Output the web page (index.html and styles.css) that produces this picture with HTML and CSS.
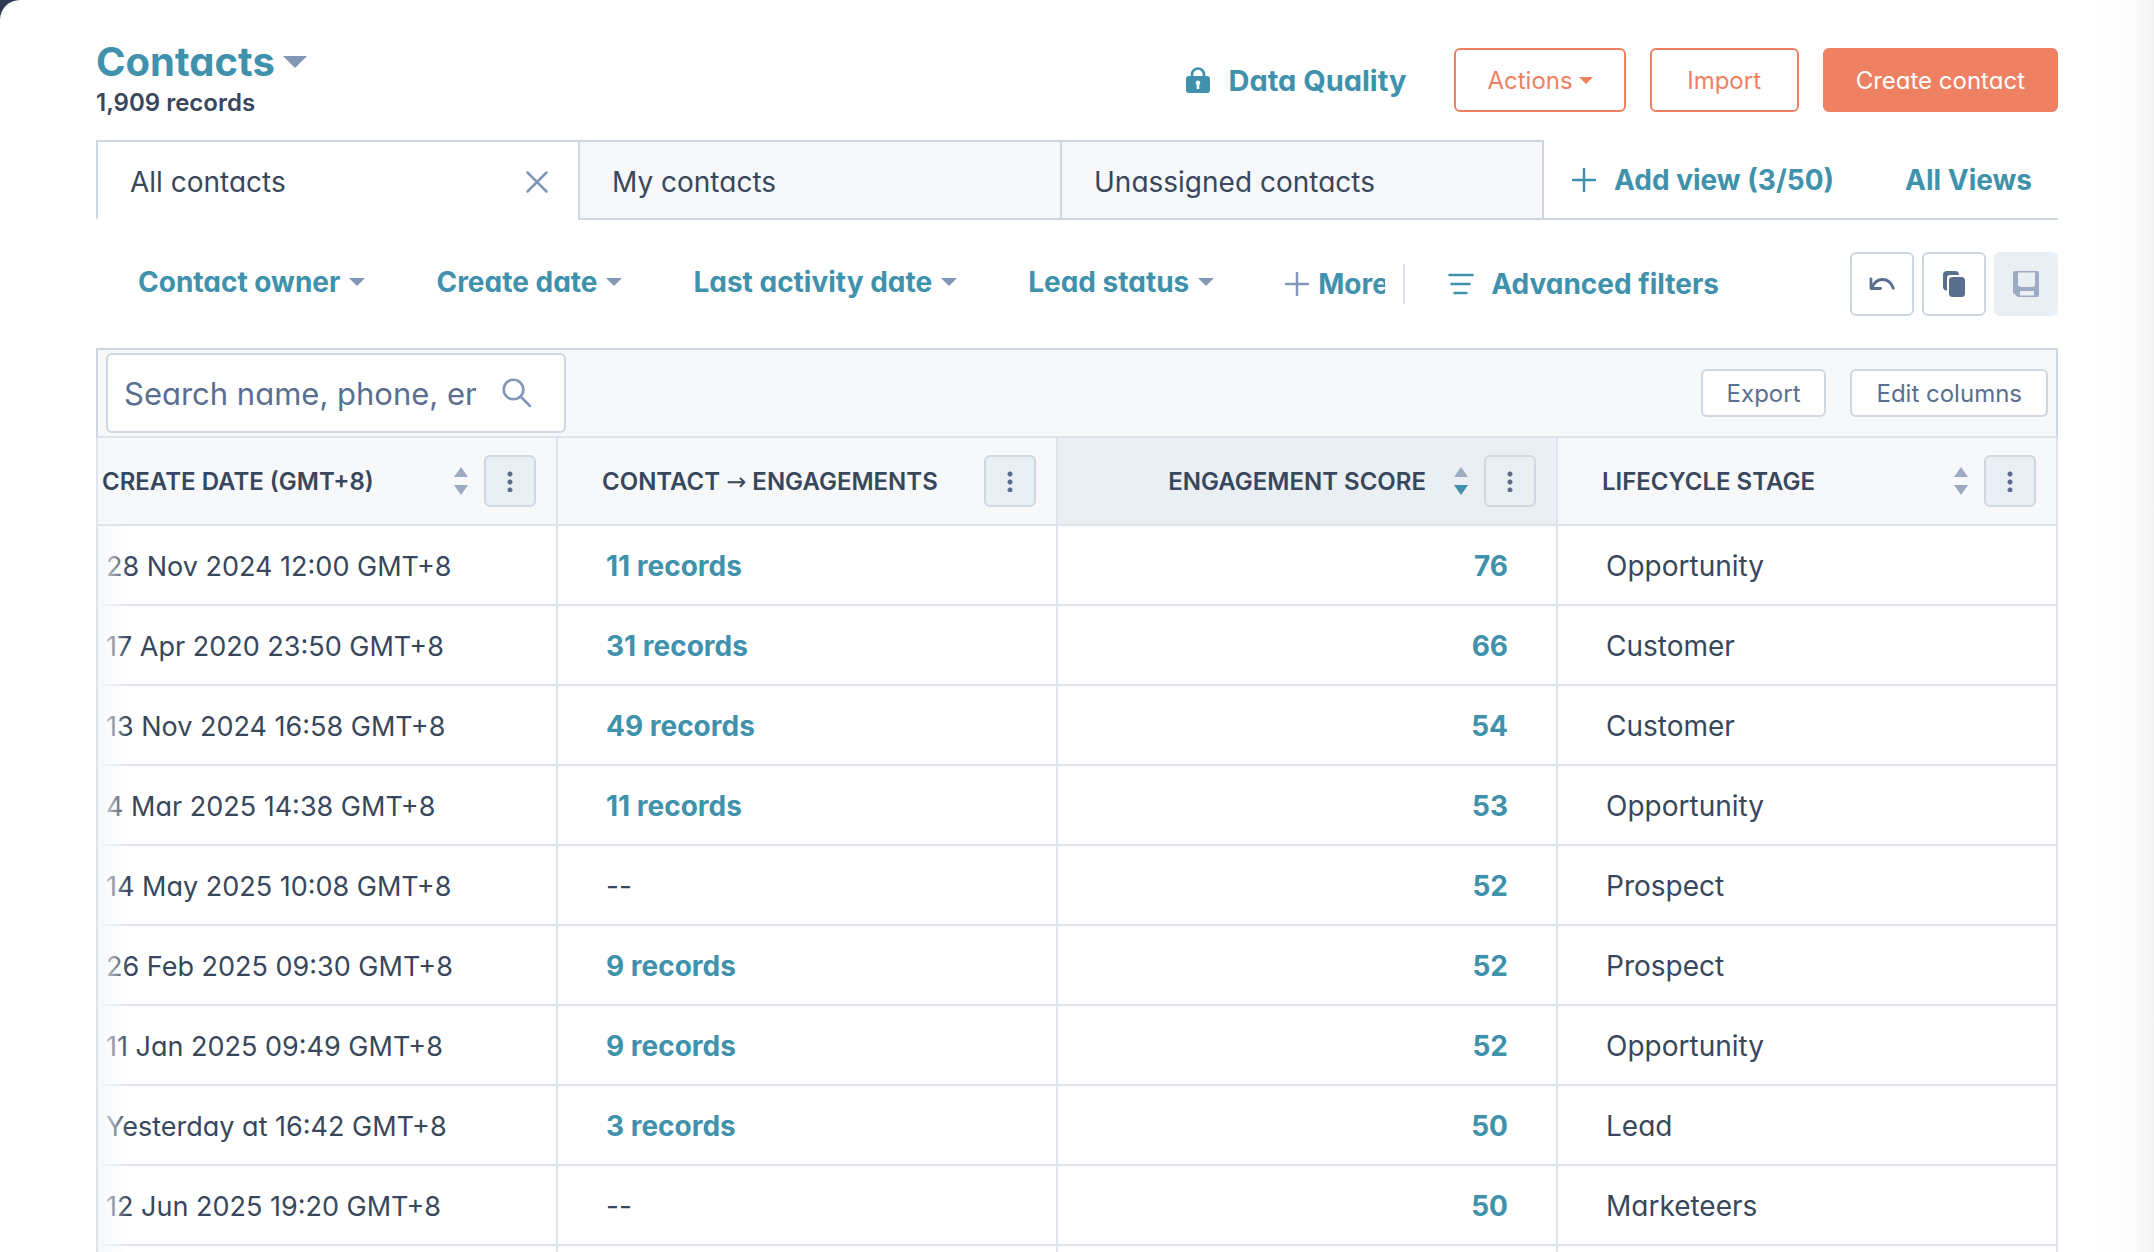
FILE: index.html
```
<!DOCTYPE html>
<html lang="en">
  <head>
    <meta charset="UTF-8" />
    <meta name="viewport" content="width=device-width, initial-scale=1.0" />
    <title>Contacts</title>
    <link rel="stylesheet" href="styles.css">
  </head>
  <body>
    <main class="page">
      <header class="page-header">
        <div class="heading">
          <h1><button class="title-btn" type="button">Contacts <span class="caret caret-lg"></span></button></h1>
          <p class="record-count">1,909 records</p>
        </div>
        <div class="header-actions">
          <a class="data-quality" href="#">
            <svg width="24" height="26" viewBox="0 0 24 26" aria-hidden="true">
              <path d="M6 10V7.500a6 6 0 0 1 12 0V10" fill="none" stroke="currentColor" stroke-width="2.600" />
              <rect x="0" y="9" width="24" height="17" rx="3" fill="currentColor" />
              <path d="M12 13.500a2.300 2.300 0 0 1 1.300 4.200V22h-2.600v-4.300A2.300 2.300 0 0 1 12 13.500z" fill="#fff" />
            </svg>
            Data Quality
          </a>
          <button class="btn btn-outline" type="button">Actions <span class="caret caret-sm"></span></button>
          <button class="btn btn-outline" type="button">Import</button>
          <button class="btn btn-primary" type="button">Create contact</button>
        </div>
      </header>

      <nav class="tabs">
        <div class="tab active">
          <a href="#">All contacts</a>
          <button class="tab-close" type="button" aria-label="Close view">
            <svg width="22" height="22" viewBox="0 0 22 22"><path d="M1.500 1.500l19 19M20.500 1.500l-19 19" stroke="currentColor" stroke-width="2.500" stroke-linecap="round" /></svg>
          </button>
        </div>
        <div class="tab"><a href="#">My contacts</a></div>
        <div class="tab"><a href="#">Unassigned contacts</a></div>
        <div class="view-actions">
          <button class="link-btn add-view" type="button">
            <svg width="24" height="24" viewBox="0 0 24 24"><path d="M12 1v22M1 12h22" stroke="currentColor" stroke-width="2.500" stroke-linecap="round" /></svg>
            Add view (3/50)
          </button>
          <a class="link-btn" href="#">All Views</a>
        </div>
      </nav>

      <section class="filters">
        <button class="link-btn filter" type="button">Contact owner <span class="caret"></span></button>
        <button class="link-btn filter" type="button">Create date <span class="caret"></span></button>
        <button class="link-btn filter" type="button">Last activity date <span class="caret"></span></button>
        <button class="link-btn filter" type="button">Lead status <span class="caret"></span></button>
        <button class="link-btn more" type="button">
          <svg width="24" height="24" viewBox="0 0 24 24"><path d="M12 1v22M1 12h22" stroke="#8296b5" stroke-width="2.500" stroke-linecap="round" /></svg>
          <span class="more-text">More</span>
        </button>
        <button class="link-btn advanced" type="button">
          <svg width="26" height="22" viewBox="0 0 26 22"><path d="M1.500 2h23M3.500 11h18M6.500 20h12" stroke="currentColor" stroke-width="2.500" stroke-linecap="round" /></svg>
          Advanced filters
        </button>
        <div class="icon-group">
          <button class="icon-btn" type="button" aria-label="Undo">
            <svg width="26" height="14" viewBox="0 0 26 14" fill="none" stroke="currentColor" stroke-width="2.800" stroke-linecap="round" stroke-linejoin="round"><path d="M2 2v9.500h9.500" /><path d="M2.500 11C5 5.500 9 2.500 13.500 2.500c5 0 9 3.500 10.800 8.700" /></svg>
          </button>
          <button class="icon-btn" type="button" aria-label="Duplicate">
            <svg width="22" height="26" viewBox="0 0 22 26" fill="currentColor"><path d="M4 0h8a4 4 0 0 1 4 4H7a3 3 0 0 0-3 3v12.500A4 4 0 0 1 0 16V4a4 4 0 0 1 4-4z" /><rect x="6" y="6" width="16" height="20" rx="3.500" /></svg>
          </button>
          <button class="icon-btn" type="button" aria-label="Save" disabled>
            <svg width="26" height="26" viewBox="0 0 26 26"><path fill="currentColor" fill-rule="evenodd" d="M2 0h22a2 2 0 0 1 2 2v22a2 2 0 0 1-2 2H5l-5-4V2a2 2 0 0 1 2-2zM5 1.500V13a3 3 0 0 0 3 3h11a3 3 0 0 0 3-3V1.500zM7 20v4.500h14V20z" /></svg>
          </button>
        </div>
      </section>

      <section class="table-card">
        <div class="toolbar">
          <label class="search">
            <input type="text" placeholder="Search name, phone, email" aria-label="Search contacts" />
            <svg width="30" height="30" viewBox="0 0 30 30" fill="none" stroke="currentColor" stroke-width="2.600" stroke-linecap="round"><circle cx="11.500" cy="11.500" r="9.800" /><path d="M19 19l9 9" /></svg>
          </label>
          <div class="toolbar-actions">
            <button class="btn-small" type="button">Export</button>
            <button class="btn-small" type="button">Edit columns</button>
          </div>
        </div>

        <div class="table-wrap">
          <table>
            <colgroup>
              <col class="col-date" />
              <col />
              <col />
              <col />
            </colgroup>
            <thead>
              <tr>
                <th class="date">
                  <div class="th-inner">
                    <span class="th-label">Create date (GMT+8)</span>
                    <span class="sort"></span>
                    <button class="menu-btn" type="button" aria-label="Column options"><span class="dots"></span></button>
                  </div>
                </th>
                <th>
                  <div class="th-inner">
                    <span class="th-label">Contact <span class="arrow">→</span> Engagements</span>
                    <button class="menu-btn" type="button" aria-label="Column options"><span class="dots"></span></button>
                  </div>
                </th>
                <th class="sorted">
                  <div class="th-inner">
                    <span class="th-label">Engagement score</span>
                    <span class="sort desc"></span>
                    <button class="menu-btn" type="button" aria-label="Column options"><span class="dots"></span></button>
                  </div>
                </th>
                <th>
                  <div class="th-inner">
                    <span class="th-label">Lifecycle stage</span>
                    <span class="sort"></span>
                    <button class="menu-btn" type="button" aria-label="Column options"><span class="dots"></span></button>
                  </div>
                </th>
              </tr>
            </thead>
            <tbody>
              <tr><td class="date">28 Nov 2024 12:00 GMT+8</td><td><a href="#">11 records</a></td><td class="score"><a href="#">76</a></td><td>Opportunity</td></tr>
              <tr><td class="date">17 Apr 2020 23:50 GMT+8</td><td><a href="#">31 records</a></td><td class="score"><a href="#">66</a></td><td>Customer</td></tr>
              <tr><td class="date">13 Nov 2024 16:58 GMT+8</td><td><a href="#">49 records</a></td><td class="score"><a href="#">54</a></td><td>Customer</td></tr>
              <tr><td class="date">4 Mar 2025 14:38 GMT+8</td><td><a href="#">11 records</a></td><td class="score"><a href="#">53</a></td><td>Opportunity</td></tr>
              <tr><td class="date">14 May 2025 10:08 GMT+8</td><td>--</td><td class="score"><a href="#">52</a></td><td>Prospect</td></tr>
              <tr><td class="date">26 Feb 2025 09:30 GMT+8</td><td><a href="#">9 records</a></td><td class="score"><a href="#">52</a></td><td>Prospect</td></tr>
              <tr><td class="date">11 Jan 2025 09:49 GMT+8</td><td><a href="#">9 records</a></td><td class="score"><a href="#">52</a></td><td>Opportunity</td></tr>
              <tr><td class="date">Yesterday at 16:42 GMT+8</td><td><a href="#">3 records</a></td><td class="score"><a href="#">50</a></td><td>Lead</td></tr>
              <tr><td class="date">12 Jun 2025 19:20 GMT+8</td><td>--</td><td class="score"><a href="#">50</a></td><td>Marketeers</td></tr>
              <tr><td class="date"></td><td></td><td></td><td></td></tr>
            </tbody>
          </table>
        </div>
      </section>
    </main>
  </body>
</html>
```
FILE: styles.css
```
* {
  box-sizing: border-box;
}
body {
  margin: 0;
  background-color: #2e3a50;
  font-family: Inter, "Liberation Sans", sans-serif;
  font-feature-settings: "cv11"; /* single-storey a */
  font-size: 28px;
  color: #38475b;
}
button,
input {
  font: inherit;
  font-feature-settings: inherit;
}
button {
  cursor: pointer;
}
a {
  color: inherit;
  text-decoration: none;
}
svg {
  display: block;
  flex: none;
}
.page {
  height: 100vh;
  overflow: hidden;
  padding: 38px 96px 0;
  border-top-left-radius: 20px;
  background: linear-gradient(to left, #f3f3f3, #fbfbfb 20px, #fff 60px);
}

/* Header */
.page-header {
  display: flex;
  justify-content: space-between;
  height: 102px;
}
h1,
p {
  margin: 0;
}
h1 {
  font-size: 40px;
  line-height: 48px;
}
.title-btn {
  display: flex;
  align-items: center;
  gap: 8px;
  padding: 0;
  border: 0;
  background: none;
  color: #3f91ac;
  font-weight: 700;
}
.record-count {
  margin-top: 3px;
  font-size: 24px;
  line-height: 28px;
  font-weight: 600;
}
.caret {
  display: inline-block;
  border: 8px solid transparent;
  border-top-color: #8296b5;
  border-bottom: 0;
}
.caret-lg {
  border-width: 12px 12px 0;
}
.caret-sm {
  border-width: 7px 7px 0;
  border-top-color: #ee8162;
}
.header-actions {
  display: flex;
  align-items: center;
  gap: 24px;
  height: 64px;
  margin-top: 10px;
}
.data-quality {
  display: flex;
  align-items: center;
  gap: 18px;
  margin-right: 24px;
  color: #3f91ac;
  font-size: 29px;
  font-weight: 700;
}
.btn {
  display: flex;
  align-items: center;
  justify-content: center;
  gap: 6px;
  min-width: 149px;
  height: 64px;
  padding: 0 31px;
  border: 2px solid #ee8162;
  border-radius: 6px;
  font-size: 24px;
}
.btn-outline {
  background: #fff;
  color: #ee8162;
}
.btn-primary {
  background: #ee8162;
  color: #fff;
}

/* View tabs */
.tabs {
  display: flex;
  height: 80px;
}
.tab {
  display: flex;
  flex: 1 1 0;
  align-items: center;
  justify-content: space-between;
  max-width: 484px;
  margin-right: -2px;
  padding: 4px 30px 0 32px;
  border: 2px solid #cfd7e3;
  background: #f6f8fa;
}
.tab.active {
  background: #fff;
  border-bottom-color: #fff;
}
.tab-close {
  padding: 0;
  border: 0;
  background: none;
  color: #8296b5;
}
.view-actions {
  display: flex;
  flex: 1;
  align-items: center;
  justify-content: space-between;
  padding: 2px 26px 0 30px;
  border-bottom: 2px solid #cfd7e3;
}
.link-btn {
  display: flex;
  align-items: center;
  gap: 9px;
  padding: 0;
  border: 0;
  background: none;
  color: #3f91ac;
  font-size: 28px;
  font-weight: 700;
  white-space: nowrap;
}
.add-view {
  gap: 18px;
}

/* Filters */
.filters {
  display: flex;
  align-items: center;
  gap: 71px;
  height: 128px;
  padding-left: 42px;
}
.filter {
  padding-bottom: 4px;
}
.more-text {
  width: 67px;
  overflow: hidden;
}
.more {
  height: 40px;
  padding-right: 18px;
  border-right: 2px solid #dfe3eb;
}
.advanced {
  gap: 17px;
  margin-left: -28px;
}
.icon-group {
  display: flex;
  gap: 8px;
  margin-left: auto;
}
.icon-btn {
  display: flex;
  align-items: center;
  justify-content: center;
  width: 64px;
  height: 64px;
  padding: 0;
  border: 2px solid #cfd7e3;
  border-radius: 6px;
  background: #fff;
  color: #5a6f8f;
}
.icon-btn:disabled {
  border-color: #eaeff3;
  background: #eaeff3;
  color: #9dabc2;
}

/* Table */
.toolbar {
  display: flex;
  align-items: center;
  justify-content: space-between;
  height: 90px;
  padding: 0 8px;
  border: 2px solid #cfd7e3;
  border-bottom-color: #dfe3eb;
  background: #f6f8fa;
}
.search {
  display: flex;
  align-items: center;
  gap: 26px;
  width: 460px;
  height: 80px;
  padding: 0 32px 0 16px;
  border: 2px solid #cfd7e3;
  border-radius: 6px;
  background: #fff;
  color: #8296b5;
}
.search input {
  flex: 1;
  min-width: 0;
  padding: 0;
  border: 0;
  outline: 0;
  background: none;
  font-size: 31px;
  color: #38475b;
}
.search input::placeholder {
  color: #5a6f8f;
  opacity: 1;
}
.toolbar-actions {
  display: flex;
  gap: 24px;
}
.btn-small {
  height: 48px;
  padding: 0 24px;
  border: 2px solid #cfd7e3;
  border-radius: 6px;
  background: #fff;
  color: #5a6f8f;
  font-size: 24px;
}
.table-wrap {
  position: relative;
  border-left: 2px solid #dfe3eb;
}
.table-wrap::before {
  content: "";
  position: absolute;
  top: 88px;
  bottom: 0;
  left: 0;
  width: 30px;
  background: linear-gradient(to right, #f6f8fa, rgba(255, 255, 255, 0));
}
table {
  width: 100%;
  table-layout: fixed;
  border-collapse: separate;
  border-spacing: 0;
}
.col-date {
  width: 460px;
}
th,
td {
  padding: 2px 48px 0;
  border-right: 2px solid #dfe3eb;
  border-bottom: 2px solid #dfe3eb;
  text-align: left;
}
th {
  height: 88px;
  padding: 0 20px 0 44px;
  background: #f6f8fa;
  font-size: 24px;
  font-weight: 600;
  text-transform: uppercase;
  white-space: nowrap;
}
th.date {
  padding-left: 4px;
}
th.sorted {
  background: #eaeff3;
}
.th-inner {
  display: flex;
  align-items: center;
  gap: 16px;
}
.th-label {
  flex: 1;
}
.arrow {
  font-family: "DejaVu Sans", sans-serif;
  font-weight: 400;
}
.sorted .th-label {
  padding-right: 12px;
  text-align: right;
}
.sort {
  display: grid;
  gap: 8px;
}
.sort::before,
.sort::after {
  content: "";
  border: 7px solid transparent;
}
.sort::before {
  border-top: 0;
  border-bottom: 10px solid #9dabc2;
}
.sort::after {
  border-bottom: 0;
  border-top: 10px solid #9dabc2;
}
.sort.desc::after {
  border-top-color: #3f91ac;
}
.menu-btn {
  display: grid;
  place-items: center;
  width: 52px;
  height: 52px;
  padding: 0;
  border: 2px solid #cfd7e3;
  border-radius: 6px;
  background: #eaeff3;
}
.dots {
  width: 6px;
  height: 22px;
  background: radial-gradient(circle, #5a6f8f 2px, transparent 3px) 0 0 / 6px 8px;
}
td {
  height: 80px;
}
td.date {
  padding-left: 8px;
  padding-right: 0;
  font-size: 27px;
  white-space: nowrap;
}
td a {
  color: #3f91ac;
  font-weight: 700;
}
td.score {
  text-align: right;
}
```
